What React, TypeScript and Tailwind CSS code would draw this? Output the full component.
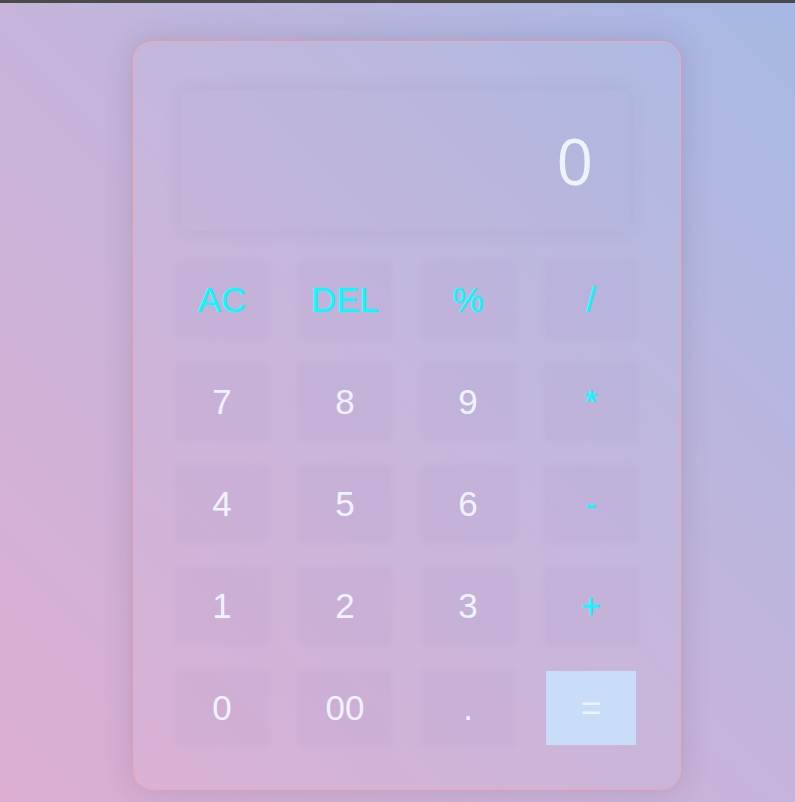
const KEYS: { label: string; op?: boolean; eq?: boolean }[] = [
  { label: "AC", op: true },
  { label: "DEL", op: true },
  { label: "%", op: true },
  { label: "/", op: true },
  { label: "7" },
  { label: "8" },
  { label: "9" },
  { label: "*", op: true },
  { label: "4" },
  { label: "5" },
  { label: "6" },
  { label: "-", op: true },
  { label: "1" },
  { label: "2" },
  { label: "3" },
  { label: "+", op: true },
  { label: "0" },
  { label: "00" },
  { label: "." },
  { label: "=", eq: true },
];

export default function App() {
  return (
    <div className="min-h-[802px] w-full bg-[linear-gradient(to_top_right,#dcaed2_0%,#c6b4da_50%,#a6b9e4_100%)] font-['Liberation_Sans',Arial,sans-serif]">
      <div className="h-[3px] bg-[#4a4a4a]" />
      <div className="pl-[133px] pt-[38px]">
        {/* calculator card */}
        <div className="w-[548px] h-[749px] rounded-[20px] border border-[#f3a9b0] bg-white/[0.03] shadow-[0_0_30px_rgba(60,50,90,0.18)] pt-[48px] px-[43px]">
          {/* display */}
          <div className="ml-[4px] w-[448px] h-[141px] bg-[rgba(120,110,170,0.02)] shadow-[0_0_18px_rgba(80,70,120,0.08)] flex items-center justify-end pr-[36px]">
            <span className="text-[64px] leading-none text-[#eef4ff] font-['Open_Sans','Liberation_Sans',sans-serif]">0</span>
          </div>

          {/* keypad */}
          <div className="mt-[32px] grid grid-cols-[repeat(4,90px)] auto-rows-[74px] gap-x-[33px] gap-y-[28px]">
            {KEYS.map((k) => (
              <button
                key={k.label}
                className={`flex items-center justify-center pb-[2px] text-[35px] leading-none ${
                  k.eq
                    ? "bg-[#c9dcf8] text-[#eef4ff]"
                    : "bg-[rgba(110,90,160,0.035)] shadow-[0_0_8px_rgba(90,70,130,0.05)]"
                } ${k.op ? "text-[#00ffff]" : k.eq ? "" : "text-[#eef4ff]"}`}
              >
                {k.label}
              </button>
            ))}
          </div>
        </div>
      </div>
    </div>
  );
}
